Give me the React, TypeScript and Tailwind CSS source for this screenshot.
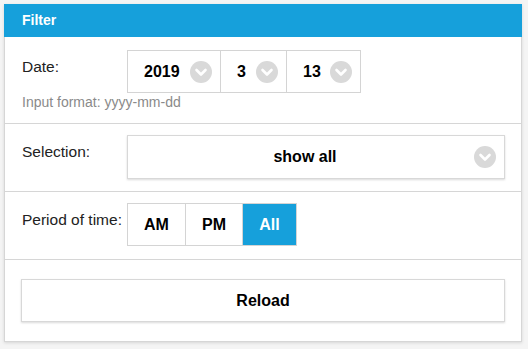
function ChevronCircle() {
  return (
    <svg width="22" height="22" viewBox="0 0 22 22" className="shrink-0">
      <circle cx="11" cy="11" r="11" fill="#d9d9d9" />
      <path
        d="M6.5 9 L11 13.5 L15.5 9"
        fill="none"
        stroke="#ffffff"
        strokeWidth="2.6"
        strokeLinecap="round"
        strokeLinejoin="round"
      />
    </svg>
  );
}

const dateParts = [
  { value: "2019", width: "w-[92px]" },
  { value: "3", width: "w-[66px]" },
  { value: "13", width: "w-[74px]" },
];

const periods = [
  { label: "AM", width: "w-[57px]", active: false },
  { label: "PM", width: "w-[57px]", active: false },
  { label: "All", width: "w-[54px]", active: true },
];

export default function App() {
  return (
    <div className="w-[528px] h-[349px] bg-[#f4f4f4] pt-[4px] pl-[4px] font-['Liberation_Sans',Arial,sans-serif]">
      <div className="w-[518px] bg-white shadow-[0_1px_3px_rgba(0,0,0,0.12)]">
        <div className="h-[33px] bg-[#16a0db] flex items-center px-[18px] text-white font-bold text-[14px]">
          Filter
        </div>
        <div className="border-x border-b border-[#d6d6d6]">
          {/* date */}
          <div className="px-4 pt-[13px] pb-[13px] border-b border-[#d6d6d6]">
            <div className="flex">
              <div className="w-[106px] shrink-0 pt-[8px] pl-px text-[15.5px] leading-[17px] text-[#222]">
                Date:
              </div>
              <div className="flex h-[43px] border border-[#d4d4d4]">
                {dateParts.map((p, i) => (
                  <div
                    key={p.value}
                    className={`${p.width} flex items-center justify-between pl-4 pr-2 ${
                      i > 0 ? "border-l border-[#d4d4d4]" : ""
                    }`}
                  >
                    <span className="font-bold text-[16px] text-black">{p.value}</span>
                    <ChevronCircle />
                  </div>
                ))}
              </div>
            </div>
            <div className="mt-[1px] pl-px text-[14px] leading-[16px] text-[#8a8a8a]">
              Input format: yyyy-mm-dd
            </div>
          </div>

          {/* selection */}
          <div className="px-4 pt-[11px] pb-[12px] border-b border-[#d6d6d6] flex">
            <div className="w-[106px] shrink-0 pt-[8px] pl-px text-[15.5px] leading-[17px] text-[#222]">
              Selection:
            </div>
            <div className="flex-1 h-[44px] border border-[#d8d8d8] shadow-[0_1px_2px_rgba(0,0,0,0.15)] flex items-center pr-2">
              <span className="flex-1 text-center pl-2 font-bold text-[16px] text-black">show all</span>
              <ChevronCircle />
            </div>
          </div>

          {/* period */}
          <div className="px-4 pt-[11px] pb-[13px] border-b border-[#d6d6d6] flex">
            <div className="w-[106px] shrink-0 pt-[8px] pl-px text-[15.5px] leading-[17px] text-[#222]">
              Period of time:
            </div>
            <div className="flex h-[43px] border border-[#d4d4d4]">
              {periods.map((p, i) => (
                <div
                  key={p.label}
                  className={`${p.width} flex items-center justify-center font-bold text-[16px] ${
                    p.active ? "bg-[#16a0db] text-white" : "text-black"
                  } ${i > 0 ? "border-l border-[#d4d4d4]" : ""}`}
                >
                  {p.label}
                </div>
              ))}
            </div>
          </div>

          {/* reload */}
          <div className="px-4 pt-[19px] pb-[19px]">
            <button className="w-full h-[43px] border border-[#d8d8d8] bg-white shadow-[0_1px_2px_rgba(0,0,0,0.15)] font-bold text-[16px] text-black">
              Reload
            </button>
          </div>
        </div>
      </div>
    </div>
  );
}
